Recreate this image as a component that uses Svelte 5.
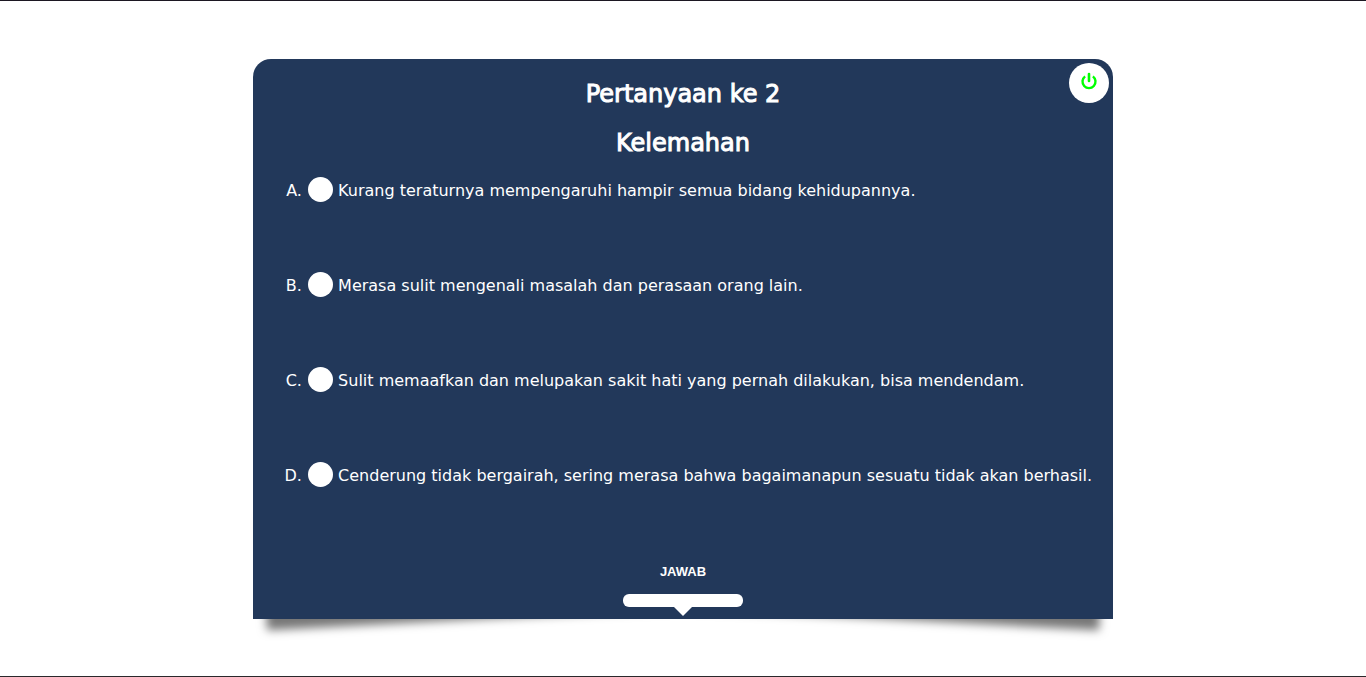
<script>
  const options = [
    'Kurang teraturnya mempengaruhi hampir semua bidang kehidupannya.',
    'Merasa sulit mengenali masalah dan perasaan orang lain.',
    'Sulit memaafkan dan melupakan sakit hati yang pernah dilakukan, bisa mendendam.',
    'Cenderung tidak bergairah, sering merasa bahwa bagaimanapun sesuatu tidak akan berhasil.'
  ];
  let selected = $state('');
</script>

<main>
  <form class="card" onsubmit={(e) => e.preventDefault()}>
    <button type="button" class="power" aria-label="Keluar">
      <svg viewBox="0 0 16 16" width="16" height="16" fill="none" stroke="currentColor">
        <path d="M4.1 3.4A6.5 6.5 0 1 0 11.9 3.4" stroke-width="2.4" />
        <path d="M8 1v7" stroke-width="2.6" stroke-linecap="round" />
      </svg>
    </button>
    <h2>Pertanyaan ke 2</h2>
    <h2>Kelemahan</h2>
    <ol>
      {#each options as option, i}
        <li>
          <label>
            <input type="radio" name="answer" value={String(i)} bind:group={selected} />
            {option}
          </label>
        </li>
      {/each}
    </ol>
    <button class="answer">JAWAB</button>
  </form>
</main>

<style>
  :global(body) {
    margin: 0;
    background: #fff;
  }
  main {
    box-sizing: border-box;
    min-height: 100vh;
    display: flex;
    align-items: center;
    justify-content: center;
    border-top: 1px solid #1c1722;
    border-bottom: 1px solid #2a282b;
    font-family: Verdana, "DejaVu Sans", sans-serif;
    font-size: 16px;
    isolation: isolate;
  }
  .card {
    position: relative;
    box-sizing: border-box;
    width: 100%;
    max-width: 860px;
    padding: 21px 0 12px;
    display: flex;
    flex-direction: column;
    align-items: center;
    background: #22385a;
    color: #fff;
    border-radius: 18px 18px 0 0;
  }
  .card::before,
  .card::after {
    content: "";
    position: absolute;
    z-index: -1;
    bottom: 15px;
    left: 10px;
    width: 50%;
    height: 20%;
    box-shadow: 0 15px 10px #777;
    transform: rotate(-3deg);
  }
  .card::after {
    left: auto;
    right: 10px;
    transform: rotate(3deg);
  }
  .power {
    position: absolute;
    top: 4px;
    right: 4px;
    width: 40px;
    height: 40px;
    padding: 0 0 4px;
    display: flex;
    align-items: center;
    justify-content: center;
    border: 0;
    border-radius: 50%;
    background: #fff;
    color: #0f0;
  }
  .power svg {
    overflow: visible;
  }
  h2 {
    margin: 0 0 20px;
    font-size: 24px;
    line-height: 29px;
    font-weight: 400;
    -webkit-text-stroke: 1px #fff;
  }
  ol {
    align-self: stretch;
    margin: 0;
    padding: 0 0 0 54px;
    list-style: upper-alpha;
  }
  li {
    min-height: 95px;
    line-height: 24px;
  }
  label {
    display: inline-block;
    margin-top: -1px;
  }
  input {
    appearance: none;
    width: 25px;
    height: 25px;
    margin: 0 0 0 1px;
    vertical-align: -6px;
    border-radius: 50%;
    background: #fff;
  }
  input:checked {
    background: #0f0;
  }
  .answer {
    position: relative;
    width: 120px;
    height: 44px;
    margin-bottom: 5px;
    padding: 0 0 15px;
    border: 0;
    background: none;
    color: #fff;
    font: bold 13px/20px "Liberation Sans", Arial, sans-serif;
  }
  .answer::before {
    content: "";
    position: absolute;
    bottom: -5px;
    left: 0;
    width: 100%;
    height: 13px;
    border-radius: 6px;
    background: #fff;
  }
  .answer::after {
    content: "";
    position: absolute;
    bottom: -14px;
    left: 50%;
    margin-left: -9px;
    border: 9px solid transparent;
    border-top-color: #fff;
    border-bottom: 0;
  }
</style>
